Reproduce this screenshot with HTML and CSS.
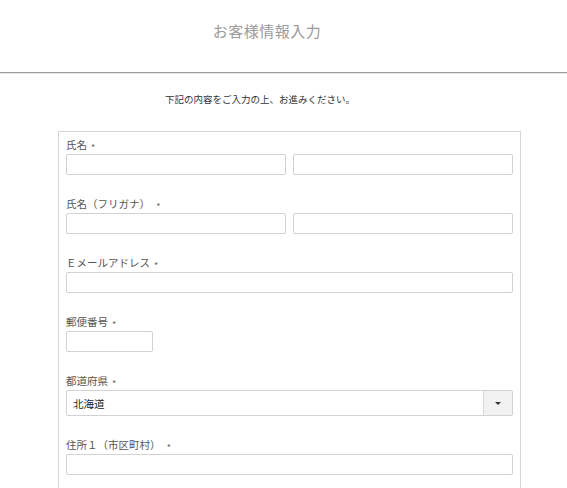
FILE: index.html
```html
<!DOCTYPE html>
<html lang="ja">
<head>
<meta charset="utf-8">
<link rel="stylesheet" href="styles.css">
</head>
<body>
<header class="header">
  <h1 class="title">お客様情報入力</h1>
</header>
<p class="lead">下記の内容をご入力の上、お進みください。</p>
<form class="card">
  <div class="group">
    <label class="label">氏名<span class="req">*</span></label>
    <div class="row">
      <input class="input" type="text">
      <input class="input" type="text">
    </div>
  </div>
  <div class="group">
    <label class="label">氏名（フリガナ） <span class="req">*</span></label>
    <div class="row">
      <input class="input" type="text">
      <input class="input" type="text">
    </div>
  </div>
  <div class="group">
    <label class="label">Ｅメールアドレス<span class="req">*</span></label>
    <input class="input" type="text">
  </div>
  <div class="group">
    <label class="label">郵便番号<span class="req">*</span></label>
    <input class="input zip" type="text">
  </div>
  <div class="group">
    <label class="label">都道府県<span class="req">*</span></label>
    <div class="select">
      <span class="select-value">北海道</span>
      <span class="select-btn"><span class="caret"></span></span>
    </div>
  </div>
  <div class="group">
    <label class="label">住所１（市区町村） <span class="req">*</span></label>
    <input class="input" type="text">
  </div>
</form>
</body>
</html>
```
FILE: styles.css
```css
html, body {
  margin: 0;
  padding: 0;
  background: #fff;
  font-family: "Noto Sans CJK JP", "Noto Sans", sans-serif;
  color: #333;
}
.header {
  height: 72px;
  border-bottom: 1px solid #9a9ea3;
  box-shadow: 0 1px 0 #e4e6e8;
  display: flex;
  align-items: center;
  justify-content: center;
  padding-right: 33px;
}
.title {
  margin: 0;
  padding-bottom: 12px;
  font-size: 15px;
  font-weight: normal;
  color: #9b9b9b;
  letter-spacing: 0.5px;
}
.lead {
  margin: 18px 0 0;
  padding-right: 47px;
  text-align: center;
  font-size: 9.5px;
  line-height: 16px;
  color: #333;
}
.card {
  margin: 24px 0 0 58px;
  width: 447px;
  padding: 6px 7px 0;
  border: 1px solid #d6d6d6;
  border-bottom: none;
  height: 400px;
}
.group {
  margin-bottom: 22px;
}
.label {
  display: block;
  height: 14px;
  font-size: 10.5px;
  line-height: 14px;
  margin-bottom: 2px;
  color: #555;
}
.req {
  position: relative;
  top: 2px;
  font-size: 9px;
  line-height: 1;
  color: #666;
  margin-left: 4px;
}
.row {
  display: flex;
  gap: 7px;
}
.input {
  display: block;
  box-sizing: border-box;
  width: 100%;
  height: 21px;
  margin: 0;
  padding: 0 6px;
  border: 1px solid #d2d2d2;
  border-radius: 2px;
  background: #fff;
  font: inherit;
}
.row .input {
  flex: 1;
}
.zip {
  width: 87px;
}
.select {
  box-sizing: border-box;
  height: 26px;
  border: 1px solid #d2d2d2;
  border-radius: 2px;
  display: flex;
  align-items: stretch;
}
.select-value {
  flex: 1;
  display: flex;
  align-items: center;
  padding-left: 6px;
  font-size: 10.5px;
  color: #222;
}
.select-btn {
  width: 28px;
  border-left: 1px solid #d8d8d8;
  background: #f2f2f2;
  display: flex;
  align-items: center;
  justify-content: center;
}
.caret {
  width: 0;
  height: 0;
  border-left: 3px solid transparent;
  border-right: 3px solid transparent;
  border-top: 3px solid #333;
}
```
